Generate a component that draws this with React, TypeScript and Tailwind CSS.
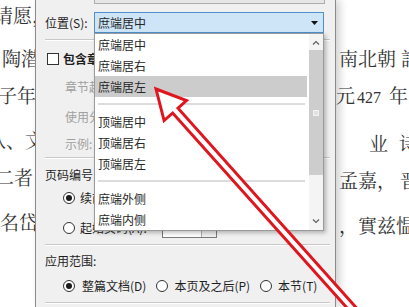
import React from 'react'

const docFont = "font-['Noto_Serif_CJK_SC','Noto_Sans_CJK_SC',serif]"
const uiFont = "font-['Microsoft_YaHei','Noto_Sans_CJK_SC',sans-serif]"

function Radio({ checked = false }: { checked?: boolean }) {
  return (
    <span className="flex h-[12px] w-[12px] shrink-0 items-center justify-center rounded-full border border-[#333] bg-white">
      {checked && <span className="h-[6px] w-[6px] rounded-full bg-[#1a1a1a]" />}
    </span>
  )
}

function Rule() {
  return <div className="h-[2px] w-full border-t border-t-[#c8c8c8] border-b border-b-white" />
}

function ListItem({ label, active = false }: { label: string; active?: boolean }) {
  return (
    <div
      className={
        active
          ? 'flex h-[21px] items-center bg-[#cccccc] pl-[3px] text-[#262626]'
          : 'flex h-[21px] items-center pl-[3px] text-[#262626]'
      }
    >
      {label}
    </div>
  )
}

function ListSeparator() {
  return (
    <div className="flex h-[14px] items-center pl-[3px] pr-[2px]">
      <div className="h-[2px] w-full bg-[#dcdcdc]" />
    </div>
  )
}

function PositionList() {
  return (
    <div
      className={`absolute left-[94px] top-[33px] z-20 flex h-[198px] w-[230px] border border-[#9a9a9a] bg-white text-[12px] shadow-[2px_2px_4px_rgba(0,0,0,0.25)] ${uiFont}`}
    >
      <div className="flex w-[212px] flex-col">
        <ListItem label="庶端居中" />
        <ListItem label="庶端居右" />
        <ListItem label="庶端居左" active />
        <ListSeparator />
        <ListItem label="顶端居中" />
        <ListItem label="顶端居右" />
        <ListItem label="顶端居左" />
        <ListSeparator />
        <ListItem label="庶端外侧" />
        <ListItem label="庶端内侧" />
      </div>
      <div className="ml-[2px] flex w-[14px] flex-col bg-[#f4f4f4]">
        <div className="flex h-[16px] items-center justify-center">
          <svg width="8" height="5" viewBox="0 0 8 5">
            <path d="M1 4.5 L4 1.5 L7 4.5" fill="none" stroke="#606060" strokeWidth="1.2" />
          </svg>
        </div>
        <div className="flex h-[125px] items-center justify-center bg-[#cdcdcd]">
          <div className="h-[6px] w-[6px] border border-[#f2f2f2] bg-[#e2e2e2]" />
        </div>
        <div className="flex-1" />
        <div className="flex h-[17px] items-center justify-center">
          <svg width="8" height="5" viewBox="0 0 8 5">
            <path d="M1 0.5 L4 3.5 L7 0.5" fill="none" stroke="#606060" strokeWidth="1.2" />
          </svg>
        </div>
      </div>
    </div>
  )
}

function Dialog() {
  return (
    <div
      className={`relative z-10 flex h-full w-[301px] shrink-0 flex-col border-x border-x-[#8a8a8a] bg-[#f0f0f0] pl-[9px] pr-[5px] text-[12px] text-[#1e1e1e] shadow-[4px_0_8px_rgba(0,0,0,0.18)] ${uiFont}`}
    >
      <div className="-mt-[16px] ml-[49px] h-[20px] w-[231px] shrink-0 border border-[#adadad] bg-[#e6e6e6]" />

      <div className="mt-[8px] flex h-[21px] shrink-0 items-center">
        <span className="w-[49px]">位置(S):</span>
        <div className="flex h-full w-[230px] items-center justify-between border border-[#4d8fcf] bg-[#cde5f7] pl-[3px] pr-[5px] text-[#262626]">
          <span>庶端居中</span>
          <svg width="7" height="4" viewBox="0 0 7 4">
            <path d="M0 0 L7 0 L3.5 4 Z" fill="#111" />
          </svg>
        </div>
      </div>

      <div className="mt-[6px] shrink-0">
        <Rule />
      </div>

      <div className="mt-[12px] flex h-[12px] shrink-0 items-center gap-[4px] pl-[2px]">
        <span className="h-[12px] w-[12px] border border-[#333] bg-white" />
        <span className="font-bold">包含章节号(N)</span>
      </div>

      <div className="mt-[14px] h-[16px] shrink-0 pl-[20px] leading-[16px] text-[#a0a0a0]">章节起始样式(P):</div>
      <div className="mt-[14px] h-[16px] shrink-0 pl-[20px] leading-[16px] text-[#a0a0a0]">使用分隔符(E):</div>
      <div className="mt-[11px] h-[16px] shrink-0 pl-[20px] leading-[16px] text-[#a0a0a0]">示例:</div>

      <div className="mt-[5px] shrink-0">
        <Rule />
      </div>

      <div className="mt-[8px] h-[16px] shrink-0 leading-[16px]">页码编号</div>

      <div className="mt-[9px] flex h-[12px] shrink-0 items-center gap-[5px] pl-[18px]">
        <Radio checked />
        <span>续前节(C)</span>
      </div>

      <div className="mt-[14px] flex h-[20px] shrink-0 items-center pl-[18px]">
        <Radio />
        <span className="ml-[5px] w-[82px]">起始页码(A):</span>
        <div className="flex h-full w-[55px] border border-[#7a7a7a] bg-white">
          <div className="flex-1" />
          <div className="flex w-[15px] items-center justify-center border-l border-l-[#adadad] bg-[#f0f0f0]">
            <svg width="5" height="3" viewBox="0 0 5 3">
              <path d="M0 0 L5 0 L2.5 3 Z" fill="#333" />
            </svg>
          </div>
        </div>
      </div>

      <div className="mt-[6px] shrink-0">
        <Rule />
      </div>

      <div className="mt-[7px] h-[16px] shrink-0 leading-[16px]">应用范围:</div>

      <div className="mt-[11px] flex h-[12px] shrink-0 items-center gap-[10px] pl-[18px]">
        <div className="flex items-center gap-[7px]">
          <Radio checked />
          <span>整篇文档(D)</span>
        </div>
        <div className="flex items-center gap-[6px]">
          <Radio />
          <span>本页及之后(P)</span>
        </div>
        <div className="flex items-center gap-[6px]">
          <Radio />
          <span>本节(T)</span>
        </div>
      </div>

      <div className="mt-[10px] shrink-0">
        <Rule />
      </div>
    </div>
  )
}

function LeftPage() {
  return (
    <div className={`flex w-[35px] shrink-0 flex-col overflow-hidden whitespace-nowrap text-[19px] leading-[20px] text-[#333] ${docFont}`}>
      <div className="mt-[5px] -ml-[6px]">请愿，</div>
      <div className="mt-[23px] ml-[2px]">陶潜</div>
      <div className="mt-[17px] -ml-[2px]">子年</div>
      <div className="mt-[25px] -ml-[13px]">八、文</div>
      <div className="mt-[17px] -ml-[5px]">二者</div>
      <div className="mt-[25px]">名岱</div>
    </div>
  )
}

function RightPage() {
  return (
    <div className={`flex flex-1 flex-col overflow-hidden whitespace-nowrap pl-[3px] text-[19px] leading-[20px] text-[#333] ${docFont}`}>
      <div className="mt-[48px] flex">
        <span>南北朝</span>
        <span className="ml-[5px]">詩</span>
      </div>
      <div className="mt-[17px] flex items-baseline">
        <span className="-ml-[3px]">元</span>
        <span className="ml-[2px] font-['Liberation_Serif',serif] text-[16px]">427</span>
        <span className="ml-[8px]">年</span>
      </div>
      <div className="mt-[25px] flex pl-[30px]">
        <span>业</span>
        <span className="ml-[11px]">诗</span>
      </div>
      <div className="mt-[17px] flex">
        <span>孟嘉，</span>
        <span className="ml-[4px]">晋</span>
      </div>
      <div className="mt-[25px]">，實兹愠</div>
    </div>
  )
}

function RedArrow() {
  return (
    <svg className="pointer-events-none absolute left-0 top-0 z-30" width="409" height="307" viewBox="0 0 409 307">
      <polygon
        points="156,89 186.5,100.6 178,108.2 378.6,332.7 373.4,337.4 172.7,113 164.1,120.6"
        fill="#ffffff"
        stroke="#e0161e"
        strokeWidth="3"
        strokeLinejoin="miter"
      />
    </svg>
  )
}

export default function App() {
  return (
    <div className="relative flex h-[307px] w-[409px] overflow-hidden bg-white">
      <LeftPage />
      <Dialog />
      <RightPage />
      <PositionList />
      <RedArrow />
    </div>
  )
}
